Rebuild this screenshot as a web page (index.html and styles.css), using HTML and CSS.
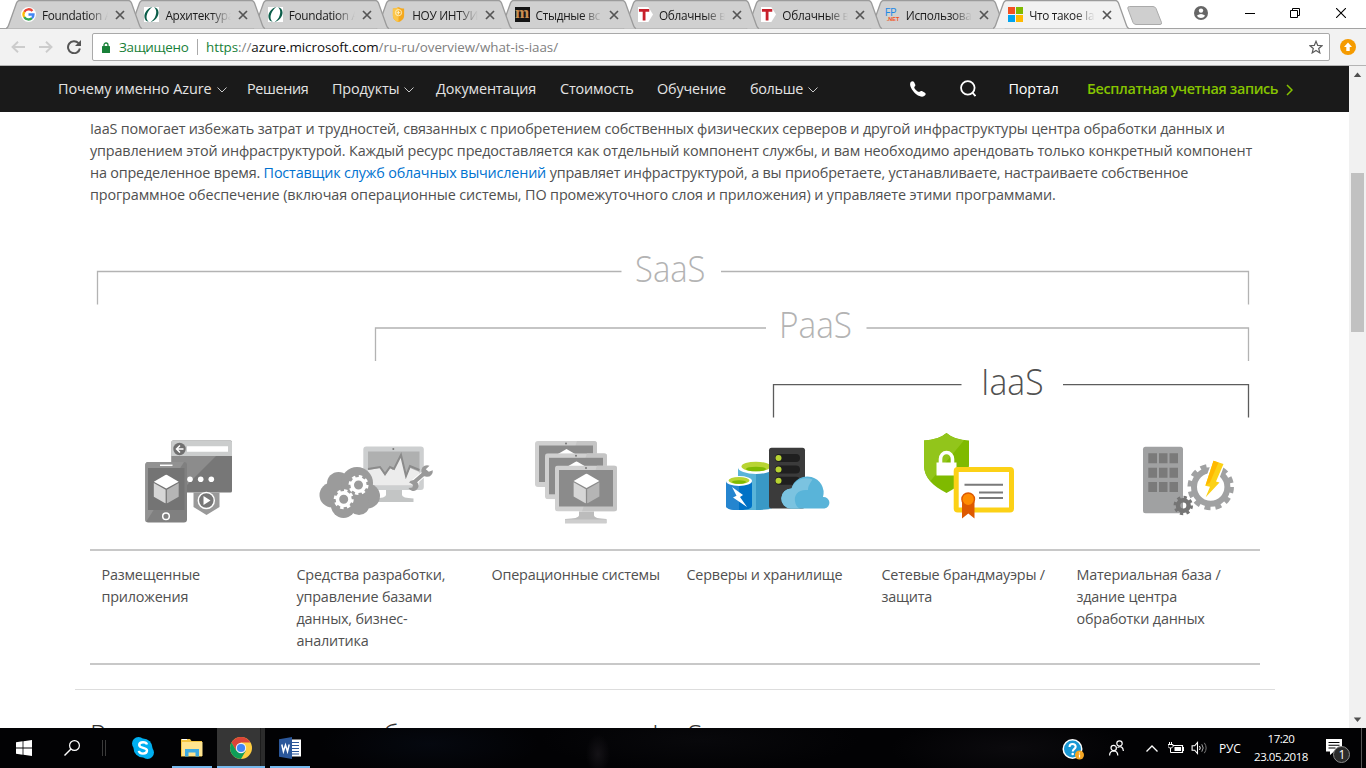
FILE: index.html
```html
<!DOCTYPE html>
<html lang="ru">
<head>
<meta charset="utf-8">
<title>Что такое IaaS?</title>
<link rel="stylesheet" href="styles.css">
</head>
<body>
<svg class="defs" width="0" height="0">
  <defs>
    <symbol id="tabshape" viewBox="0 0 137 29" preserveAspectRatio="none"><path d="M0 28.5 C1.500 28 2 27 2.500 25.500 L10.500 3 Q11.500 .5 13.500 .5 H122.500 Q124.500 .5 125.500 3 L133.500 25.500 C134 27 134.500 28 136 28.500" stroke="#9b9b9b" stroke-width="1.300"/></symbol>
    <symbol id="x" viewBox="0 0 10 10"><path d="M1 1 9 9M9 1 1 9" stroke="#555" stroke-width="1.700" fill="none"/></symbol>
    <symbol id="leaf" viewBox="0 0 16 16"><path fill="#fff" d="M0 0h16v16H0z"/><path fill="#0b5d49" fill-rule="evenodd" d="M9 0C4 1 0 6 .5 11c.3 3 2 4.500 4.500 4.800C2.500 14 2 10.500 3.500 7 4.500 4.500 6.500 1.500 9 0ZM10.500 .2c3 2 3 6 1.800 9C11.300 12 9.500 14.300 7 15.800 11.500 15 15.800 10 15.500 5.500 15.300 2.500 13.500.5 10.500 .2Z"/></symbol>
    <symbol id="tred" viewBox="0 0 16 16"><path fill="#fff" d="M0 0h11l5 8-5 8H0z"/><path fill="#c8202b" d="M1 2h11v3H8v9.500H5V5H1z"/></symbol>
    <symbol id="cube" viewBox="0 0 24 28"><path fill="#fff" d="M12 0 24 7 12 13.500 0 7z"/><path fill="#d6d6d6" d="M0 8.200 11.400 14.700V28L0 21.500z"/><path fill="#b5b5b5" d="M24 8.200 12.600 14.700V28L24 21.500z"/></symbol>
    <symbol id="monitor" viewBox="0 0 62 46"><rect width="62" height="46" rx="3" fill="#d0d0d0"/><path d="M42 0h17q3 0 3 3v40q0 3-3 3H27z" fill="#c5c5c5"/><rect x="4" y="4.500" width="54" height="36.500" fill="#8b8b8b"/><circle cx="31" cy="2.500" r="1" fill="#777"/><use href="#cube" x="18" y="8" width="27" height="30"/></symbol>
    <symbol id="chev" viewBox="0 0 10 6"><path d="M.5.5 5 5 9.500.5" fill="none" stroke="#c8c8c8" stroke-width="1"/></symbol>
  </defs>
</svg>

<div class="screen">
  <header class="tabstrip">
    <div class="tab t1"><svg class="shape"><use href="#tabshape"/></svg>
      <svg class="fav" viewBox="0 0 16 16"><circle cx="8" cy="8" r="8" fill="#fff"/><g fill="none" stroke-width="2.500"><path d="M12.200 4.300A5.300 5.300 0 0 0 3.500 5.200" stroke="#ea4335"/><path d="M3.500 5.200a5.300 5.300 0 0 0 0 5.600" stroke="#fbbc05"/><path d="M3.500 10.800a5.300 5.300 0 0 0 8.200 1" stroke="#34a853"/><path d="M11.700 11.800A5 5 0 0 0 13.300 8H8" stroke="#4285f4"/></g></svg>
      <span class="ttl">Foundation A</span><svg class="close"><use href="#x"/></svg></div>
    <div class="tab t2"><svg class="shape"><use href="#tabshape"/></svg><svg class="fav"><use href="#leaf"/></svg><span class="ttl">Архитектура</span><svg class="close"><use href="#x"/></svg></div>
    <div class="tab t3"><svg class="shape"><use href="#tabshape"/></svg><svg class="fav"><use href="#leaf"/></svg><span class="ttl">Foundation A</span><svg class="close"><use href="#x"/></svg></div>
    <div class="tab t4"><svg class="shape"><use href="#tabshape"/></svg>
      <svg class="fav" viewBox="0 0 16 16"><path d="M2 1.500Q5 2 8 0q3 2 6 1.500V9c0 4-3 6-6 7-3-1-6-3-6-7z" fill="#f4a81d"/><path d="M2 1.500Q5 2 8 0v16c-3-1-6-3-6-7z" fill="#fbc64a"/><circle cx="8" cy="6" r="3.300" fill="none" stroke="#fff0c0"/><path d="M6 6h4M8 4v4" stroke="#fff0c0"/></svg>
      <span class="ttl">НОУ ИНТУИ</span><svg class="close"><use href="#x"/></svg></div>
    <div class="tab t5"><svg class="shape"><use href="#tabshape"/></svg><span class="fav mfav">m</span><span class="ttl">Стыдные вс</span><svg class="close"><use href="#x"/></svg></div>
    <div class="tab t6"><svg class="shape"><use href="#tabshape"/></svg><svg class="fav"><use href="#tred"/></svg><span class="ttl">Облачные в</span><svg class="close"><use href="#x"/></svg></div>
    <div class="tab t7"><svg class="shape"><use href="#tabshape"/></svg><svg class="fav"><use href="#tred"/></svg><span class="ttl">Облачные в</span><svg class="close"><use href="#x"/></svg></div>
    <div class="tab t8"><svg class="shape"><use href="#tabshape"/></svg><span class="fav fp"><span>FP</span><b>.NET</b></span><span class="ttl">Использова</span><svg class="close"><use href="#x"/></svg></div>
    <div class="tab active"><svg class="shape"><use href="#tabshape"/></svg>
      <svg class="fav" viewBox="0 0 16 16"><path fill="#f25022" d="M0 0h7.500v7.500H0z"/><path fill="#7fba00" d="M8.500 0H16v7.500H8.500z"/><path fill="#00a4ef" d="M0 8.500h7.500V16H0z"/><path fill="#ffb900" d="M8.500 8.500H16V16H8.500z"/></svg>
      <span class="ttl">Что такое Ia</span><svg class="close"><use href="#x"/></svg></div>
    <svg class="newtab" viewBox="0 0 36 19"><path d="M2.500.5H26q2 0 3 2l5.500 14q.5 2-1.500 2H9q-2 0-3-2L.8 2.500Q.5.5 2.500.5z" fill="#cfcfcf" stroke="#aaa"/></svg>
    <div class="winctl">
      <svg class="user" viewBox="0 0 14 14"><circle cx="7" cy="7" r="7" fill="#666"/><circle cx="7" cy="4.600" r="2.200" fill="#fff"/><path d="M2.800 9.700q4.200-3.200 8.400 0Q9.500 12 7 12t-4.200-2.300" fill="#fff"/></svg>
      <svg class="min" viewBox="0 0 10 10"><path d="M0 5.500h10" stroke="#000"/></svg>
      <svg class="max" viewBox="0 0 10 10"><path d="M.5 2.500h7v7h-7zM2.500 2.500v-2h7v7h-2" fill="none" stroke="#000"/></svg>
      <svg class="cls" viewBox="0 0 10 10"><path d="M0 0 10 10M10 0 0 10" stroke="#000" stroke-width="1.100"/></svg>
    </div>
  </header>

  <div class="toolbar">
    <svg class="arrow" viewBox="0 0 14 12"><path d="M14 6H1.500M7 .7 1.500 6 7 11.300" fill="none" stroke="#ccc" stroke-width="1.900"/></svg>
    <svg class="arrow fwd" viewBox="0 0 14 12"><path d="M0 6h12.500M7 .7 12.500 6 7 11.300" fill="none" stroke="#ccc" stroke-width="1.900"/></svg>
    <svg class="reload" viewBox="0 0 14 14"><path d="M11.500 3.200A6 6 0 1 0 12.900 8.500" fill="none" stroke="#555" stroke-width="2"/><path d="M14 0v6H8z" fill="#555"/></svg>
    <div class="omnibox">
      <svg class="lock" viewBox="0 0 8 11"><path d="M2 5V3a2 2 0 0 1 4 0v2" fill="none" stroke="#188038" stroke-width="1.300"/><rect y="4" width="8" height="7" rx=".6" fill="#188038"/></svg>
      <span class="secure">Защищено</span><i class="bar"></i>
      <span class="url"><em>https</em>://<b>azure.microsoft.com</b>/ru-ru/overview/what-is-iaas/</span>
      <svg class="star" viewBox="0 0 14 14"><path d="M7 1.300 8.700 5.400 13 5.700 9.700 8.500 10.800 12.900 7 10.500 3.200 12.900 4.300 8.500 1 5.700 5.300 5.400z" fill="none" stroke="#5a5a5a" stroke-width="1.200"/></svg>
    </div>
    <svg class="update" viewBox="0 0 16 16"><circle cx="8" cy="8" r="8" fill="#f59b00"/><path d="M8 3.500 12 8H9.700v4H6.300V8H4z" fill="#fff"/></svg>
  </div>

  <div class="viewport">
    <div class="page">
      <nav class="nav">
        <a class="n1">Почему именно Azure<svg><use href="#chev"/></svg></a><a class="n2">Решения</a><a class="n3">Продукты<svg><use href="#chev"/></svg></a><a class="n4">Документация</a><a class="n5">Стоимость</a><a class="n6">Обучение</a><a class="n7">больше<svg><use href="#chev"/></svg></a>
        <svg class="phone" viewBox="0 0 16 16"><path d="M1 .8C2 0 3.300 0 4 1l1.300 2.800c.2.700 0 1.200-.8 1.900-.7.700.2 2.200 1.700 3.600s2.900 2 3.700 1.300c.7-.6 1.300-.8 2-.5l3 1.700c.9.500 1 1.500.2 2.500-1.200 1.500-3.200 1.800-5.600.8C5.500 13.500 2 9.500.5 5.500-.2 3.500 0 1.800 1 .8z" fill="#fff"/></svg>
        <svg class="search" viewBox="0 0 17 18"><circle cx="8.300" cy="8.300" r="7.200" fill="none" stroke="#fff" stroke-width="1.900"/><path d="m13 13 3.500 4" stroke="#fff" stroke-width="2"/></svg>
        <a class="portal">Портал</a>
        <a class="free">Бесплатная учетная запись</a>
        <svg class="go" viewBox="0 0 7 12"><path d="M1 1l5 5-5 5" fill="none" stroke="#86c400" stroke-width="1.500"/></svg>
      </nav>

      <main class="content">
        <p class="intro"><span class="l1">IaaS помогает избежать затрат и трудностей, связанных с приобретением собственных физических серверов и другой инфраструктуры центра обработки данных и</span><br><span class="l2">управлением этой инфраструктурой. Каждый ресурс предоставляется как отдельный компонент службы, и вам необходимо арендовать только конкретный компонент</span><br><span class="l3">на определенное время. <a>Поставщик служб облачных вычислений</a> управляет инфраструктурой, а вы приобретаете, устанавливаете, настраиваете собственное</span><br><span class="l4">программное обеспечение (включая операционные системы, ПО промежуточного слоя и приложения) и управляете этими программами.</span></p>

        <svg class="diagram" viewBox="90 240 1170 300">
          <g fill="none" stroke="#b3b3b3" stroke-width="1.300">
            <path d="M97.500 304.500V271.500H621.500M721 271.500H1248.500V304.500"/>
            <path d="M375.500 361V328H766M866.500 328H1248.500V361"/>
            <path d="M773.500 417.500V384.700H961.500M1063 384.700H1248.500V417.500" stroke="#5c5c5c"/>
          </g>
          <g class="lbl">
            <text x="635" y="282" textLength="70.500" lengthAdjust="spacingAndGlyphs">SaaS</text>
            <text x="779" y="338.300" textLength="73" lengthAdjust="spacingAndGlyphs">PaaS</text>
            <text x="981" y="395" textLength="62.500" lengthAdjust="spacingAndGlyphs" class="dark">IaaS</text>
          </g>

          <!-- hosted applications -->
          <rect x="171.500" y="440.500" width="60.500" height="52" rx="1.500" fill="#777"/>
          <path d="M171.500 456V442q0-1.500 1.500-1.500h57.500q1.500 0 1.500 1.500v14z" fill="#cbcdcd"/>
          <path d="M171.500 456H216l-36 36h-8.500z" fill="#8c8c8c"/>
          <circle cx="179.500" cy="449" r="6.200" fill="#707070"/>
          <path d="M183.500 449h-7M180 445.500l-3.500 3.500 3.500 3.500" fill="none" stroke="#fff" stroke-width="1.500"/>
          <path d="M187 446.200h41v5.600h-41z" fill="#fff"/>
          <g fill="#fff"><circle cx="190" cy="479.300" r="2.800"/><circle cx="200.700" cy="479.300" r="2.800"/><circle cx="211.300" cy="479.300" r="2.800"/></g>
          <path d="M193.500 492.500H219.500V507L206.500 515 193.500 507z" fill="#999"/>
          <circle cx="206.300" cy="500.500" r="8" fill="#777" stroke="#fff" stroke-width="1.500"/><path d="M203.500 496l7 4.500-7 4.500z" fill="#fff"/>
          <rect x="145.300" y="462" width="41.700" height="60.500" rx="3" fill="#808080"/>
          <path d="M148.500 462H184L146 522q-.7-.5-.7-3V465q0-3 3.200-3z" fill="#929292"/>
          <path d="M148 468h36.500v42H148z" fill="#747474"/><path d="M160 465.300h12.500" stroke="#fff" stroke-width="1.500"/>
          <circle cx="166" cy="516.300" r="3.300" fill="none" stroke="#fff" stroke-width="1.500"/>
          <use href="#cube" x="153" y="474.500" width="26.500" height="29"/>

          <!-- development tools -->
          <rect x="363.300" y="446.500" width="60.500" height="43.500" rx="3" fill="#cdcfd0"/>
          <path d="M368 451.500h51.500v34H368z" fill="#afb0b0"/>
          <path d="M368 470l12-2 5 8 5-8 3 2 8-15 5 22 4-9 9.500 4v13.500H368z" fill="#ececec"/>
          <path d="M368 469l12-2 5 7 5-7 4 2 7-14 5 21 4-10 9.500 4" fill="none" stroke="#8b8b8b" stroke-width="2"/>
          <circle cx="393.300" cy="449" r="1" fill="#777"/>
          <path d="M386 490h16v5q0 3 11.500 3.500v3.500H374v-3.500q12-.5 12-3.500z" fill="#c3c5c5"/>
          <path d="M412 484l15-13" stroke="#fff" stroke-width="6"/><path d="M412 484l15-13" stroke="#999" stroke-width="4"/>
          <path d="M429.500 465.800a5.800 5.800 0 1 0 3.300 4.500l-4 1.500-3-2.600zM409 482.500a5.300 5.300 0 1 1-.5 5.500l3.800-.5 1-3z" fill="#999"/>
          <g fill="#9b9b9b"><circle cx="332" cy="495" r="12.500"/><circle cx="338.500" cy="483.500" r="11.500"/><circle cx="357" cy="483" r="16"/><circle cx="367.500" cy="496" r="12.500"/><circle cx="343.500" cy="505.500" r="12.500"/><circle cx="359" cy="504.500" r="10.500"/></g>
          <g fill="none" stroke="#fff"><circle cx="358.500" cy="485" r="6.300" stroke-width="3.600"/><circle cx="358.500" cy="485" r="8.600" stroke-width="2.800" stroke-dasharray="3.380 3.380"/><circle cx="343.700" cy="499.200" r="6.300" stroke-width="3.600"/><circle cx="343.700" cy="499.200" r="8.600" stroke-width="2.800" stroke-dasharray="3.380 3.380"/></g>

          <!-- operating systems -->
          <use href="#monitor" x="535" y="441" width="62" height="46"/>
          <use href="#monitor" x="545" y="453.300" width="62" height="46"/>
          <use href="#monitor" x="555" y="465.500" width="62" height="46"/>
          <path d="M579 511.500h15v4q0 3 12.500 3.500v4.300H565V519q14-.5 14-3.500z" fill="#bcbcbc"/><path d="M565 519.500h41.500v3.800H565z" fill="#cecece"/>

          <!-- servers and storage -->
          <path d="M738 467v39q0 4 18 4t18-4v-39z" fill="#3999c6"/><path d="M738 467v39q0 4 18 4v-43z" fill="#59b4d9"/>
          <ellipse cx="756" cy="467.500" rx="18" ry="6.500" fill="#fff"/><ellipse cx="756" cy="466.500" rx="14.500" ry="4.800" fill="#b8d432"/><ellipse cx="756" cy="469" rx="10" ry="2.300" fill="#7fba00"/>
          <path d="M726 481v25q0 4 13 4t13-4v-25z" fill="#0072c6"/><path d="M726 481v25q0 4 13 4v-29z" fill="#2585cf"/>
          <ellipse cx="739" cy="481" rx="13" ry="5" fill="#fff"/><ellipse cx="739" cy="480.500" rx="10.500" ry="3.500" fill="#b8d432"/><ellipse cx="739" cy="482" rx="7" ry="1.800" fill="#7fba00"/>
          <path d="M732 487l11 8-3 2 7 10-14-9.500 3.500-1.800z" fill="#fff"/>
          <rect x="769" y="447.800" width="36" height="60.700" rx="2.500" fill="#3b3b3b"/>
          <g fill="#1f1f1f"><rect x="775" y="454" width="25" height="8" rx="4"/><rect x="775" y="465.400" width="25" height="8" rx="4"/><rect x="775" y="476.800" width="25" height="8" rx="4"/></g>
          <g fill="#b8d432"><circle cx="778.500" cy="458" r="3"/><circle cx="778.500" cy="469.400" r="3"/><circle cx="778.500" cy="480.800" r="3"/></g>
          <path d="M791 508.500a9.500 9.500 0 0 1 .5-20 15.500 15.500 0 0 1 31.500 8.500 5.800 5.800 0 0 1 1.500 11.500z" fill="#59b4d9"/>
          <path d="M791 508.500a9.500 9.500 0 0 1 .5-20 15.500 15.500 0 0 1 21-9q-5 7-4.500 10.500c-10-1-14 5-13 11 .4 3.500 2 6.500 5 7.500z" fill="#7bc3e0"/>

          <!-- firewall and security -->
          <path d="M946.500 433q8 7 22.500 7.500v24.500c0 13-9 21-22.500 28-13.500-7-22.500-15-22.500-28V440.500q14.500-.5 22.500-7.500z" fill="#7fba00"/>
          <path d="M946.500 433q7 6 17.500 7.200L930.500 481c-4-4.500-6.500-9.500-6.500-16V440.500q14.500-.5 22.500-7.500z" fill="#92c51b"/>
          <path d="M940.500 464v-5a6 6.500 0 0 1 12 0v5" fill="none" stroke="#fff" stroke-width="3.600"/><path d="M936.500 462.500h20V475.500h-20z" fill="#fff"/>
          <rect x="956.200" y="469.500" width="55.300" height="40.500" rx="1.500" fill="#fff" stroke="#fcd116" stroke-width="5"/>
          <path d="M964.500 484.800h38.500M979 492.400h24M979 498h24" stroke="#7a7a7a" stroke-width="2"/>
          <path d="M962 502h12.500v16.500l-6.200-5-6.300 5z" fill="#dd5900"/><circle cx="968.200" cy="499.300" r="6.300" fill="#ff8c00" stroke="#dd5900" stroke-width="1.400"/>

          <!-- data center building -->
          <rect x="1143" y="446.700" width="40" height="66.500" rx="2.500" fill="#a0a1a2"/>
          <g fill="#7a7a7a"><path d="M1148.300 453.300h8.700v10h-8.700zM1159 453.300h8.500v10h-8.500zM1169.500 453.300h8.500v10h-8.500zM1148.300 467.700h8.700v10h-8.700zM1159 467.700h8.500v10h-8.500zM1169.500 467.700h8.500v10h-8.500zM1148.300 482h8.700v10h-8.700zM1159 482h8.500v10h-8.500zM1169.500 482h8.500v10h-8.500z"/></g>
          <g fill="none" stroke="#a0a1a2"><circle cx="1210.700" cy="487" r="16.700" stroke-width="6"/><circle cx="1210.700" cy="487" r="21" stroke-width="4.500" stroke-dasharray="6 5"/></g>
          <g fill="none" stroke="#757575"><circle cx="1183.300" cy="505.500" r="5.300" stroke-width="4.500"/><circle cx="1183.300" cy="505.500" r="8.200" stroke-width="3" stroke-dasharray="3.220 3.220"/></g>
          <path d="M1212.500 459.500l12.500 4-6.500 17 3.500 1.500-17.500 18 3.500-12.500-5-1.500z" fill="#fff"/>
          <path d="M1213.500 460.700l10 3.300-7.500 17.600 3.500.9-13.800 14.800 4.300-10.600-4.700-.9z" fill="#fcd116"/><path d="M1213.500 460.700l5 1.700-8.500 20-4.500 3z" fill="#ffb900"/>
        </svg>

        <div class="table">
          <div>Размещенные приложения</div><div>Средства разработки,<br>управление базами<br>данных, бизнес-<br>аналитика</div><div>Операционные системы</div><div>Серверы и хранилище</div><div>Сетевые брандмауэры /<br>защита</div><div>Материальная база /<br>здание центра<br>обработки данных</div>
        </div>
      </main>
      <hr class="rule">
      <h2 class="next"><span class="w1">Распространенные</span><span class="w2">бизнес-сценарии</span><span>IaaS</span></h2>
    </div>
    <div class="scroll">
      <svg viewBox="0 0 17 17"><path d="M4.800 11 8.500 6.500 12.200 11z" fill="#505050"/></svg>
      <i class="thumb"></i>
      <svg class="down" viewBox="0 0 17 17"><path d="M4.800 6.500 8.500 11 12.200 6.500z" fill="#505050"/></svg>
    </div>
  </div>

  <footer class="taskbar">
    <svg class="win" viewBox="0 0 16 16"><path fill="#fff" d="M0 2.200 6.600 1.300V7.600H0zM7.400 1.200 16 0v7.600H7.400zM0 8.400h6.600v6.300L0 13.800zM7.400 8.400H16V16L7.400 14.800z"/></svg>
    <svg class="find" viewBox="0 0 16 16"><circle cx="10.500" cy="5.500" r="4.900" fill="none" stroke="#fff" stroke-width="1.200"/><path d="M7 9 .5 15.500" stroke="#fff" stroke-width="1.400"/></svg>
    <i class="sep"></i>
    <span class="app skype"><svg viewBox="0 0 22 22"><circle cx="6.500" cy="6.500" r="6.500" fill="#00aff0"/><circle cx="15.500" cy="15.500" r="6.500" fill="#00aff0"/><circle cx="11" cy="11" r="9.500" fill="#00aff0"/><path d="M15 7.500Q14.300 5.300 11 5.300q-3.800 0-3.800 2.700c0 3.800 7.800 2 7.800 5.600q0 3-4 3-3.700 0-4.200-2.700" fill="none" stroke="#fff" stroke-width="2.400"/></svg></span>
    <span class="app open"><svg viewBox="0 0 22 22"><path d="M0 2h9l1.500 2H21v15.500H0z" fill="#f4c542"/><path d="M1 5h20.500v14H1z" fill="#ffe48f"/><path d="M4 19.500v-7.500h14v7.500h-3.500v-4h-7v4z" fill="#3dabe2"/><path d="M1 2.500h5" stroke="#fff"/></svg></span>
    <span class="app open current"><svg viewBox="0 0 22 22"><circle cx="11" cy="11" r="11" fill="#ffcd40"/><path d="M1.500 5.500A11 11 0 0 1 20.500 5.500H11L6.200 13.700z" fill="#db4437"/><path d="M1.500 5.500A11 11 0 0 0 11 22l4.800-8.300H6.300z" fill="#0f9d58"/><circle cx="11" cy="11" r="5.200" fill="#f1f1f1"/><circle cx="11" cy="11" r="4.100" fill="#4285f4"/></svg></span>
    <span class="app open word"><svg viewBox="0 0 22 22"><path d="M11 2.500h11v17H11z" fill="#fff"/><path d="M13 5.500h7M13 8.500h7M13 11.500h7M13 14.500h7M13 17h7" stroke="#2b579a"/><path d="M0 2.300 13 0v22L0 19.700z" fill="#2b579a"/><path d="M2.800 7.500 4.400 14.500 6.500 8l2 6.500 1.700-7" fill="none" stroke="#fff" stroke-width="1.500"/></svg></span>
    <span class="fill"></span>
    <svg class="help" viewBox="0 0 22 22"><circle cx="10.500" cy="10" r="10" fill="#fff"/><circle cx="10.500" cy="10" r="8.500" fill="#1897d4"/><path d="M7.500 8Q7.500 5 10.500 5t3.200 2.800c0 2-3 2.200-3 4.700" fill="none" stroke="#fff" stroke-width="2"/><circle cx="10.700" cy="15" r="1.300" fill="#fff"/><circle cx="17.500" cy="16" r="4.500" fill="#f5a623"/><path d="M17.500 13.500v1M17.500 15.500v3" stroke="#fff" stroke-width="1.200"/></svg>
    <svg class="people" viewBox="0 0 15 16"><g fill="none" stroke="#fff" stroke-width="1.200"><circle cx="4.700" cy="8" r="2.700"/><path d="M.6 15.500q0-4.500 4.100-4.700 4 .2 4.100 4.700"/><circle cx="10.500" cy="3.500" r="2.700"/><path d="M8.500 7.500q5.300-2.500 5.900 3.500"/></g></svg>
    <svg class="up" viewBox="0 0 12 7"><path d="M.5 6.500 6 1l5.500 5.500" fill="none" stroke="#fff" stroke-width="1.300"/></svg>
    <svg class="bat" viewBox="0 0 16 12"><path d="M5 3.500h9.500v7H4.500M14.500 5.500h1v3h-1" fill="none" stroke="#fff" stroke-width="1.200"/><path d="M6.500 5h6.500v4H6.500z" fill="#fff"/><path d="M1.500 0v3M3.500 0v3M0 2.500h5v2L3.500 6h-2L0 4.500zM2.500 6v4.500h3" stroke="#fff" fill="none"/></svg>
    <svg class="vol" viewBox="0 0 16 14"><path d="M.6 4.800h2.600L6 1.500v11L3.200 9.200H.6z" fill="none" stroke="#fff" stroke-width="1.100"/><path d="M8 5q1.500 2 0 4" stroke="#fff" fill="none"/><path d="M10.300 3.300q2.800 3.700 0 7.400" stroke="#aaa" fill="none"/><path d="M12.800 1.800q3.700 5.200 0 10.400" stroke="#777" fill="none"/></svg>
    <span class="lang">РУС</span>
    <span class="clock"><span>17:20</span><span>23.05.2018</span></span>
    <svg class="note" viewBox="0 0 25 26"><path d="M0 1h16v12.500H8L4 17v-3.500H0z" fill="#fff"/><path d="M2.500 4.500h11M2.500 7.200h11M2.500 10h7" stroke="#000" stroke-width="1.100"/><circle cx="15.500" cy="16.500" r="8" fill="#2b2b2b" stroke="#8b8b8b"/><text x="12.500" y="20.800" class="badge">1</text></svg>
    <i class="peek"></i>
  </footer>
</div>
</body>
</html>
```
FILE: styles.css
```css
* { box-sizing: border-box; }
body { margin: 0; font-family: "Open Sans", "Noto Sans", sans-serif; background: #fff; overflow: hidden; }
svg { display: block; flex: none; }
.defs { position: absolute; }
.screen { width: 1366px; height: 768px; display: flex; flex-direction: column; overflow: hidden; }

/* browser tabs */
.tabstrip { height: 29px; display: flex; padding-left: 6px; background: #fff; flex: none; position: relative; box-shadow: inset 0 -1px #a3a3a3; }
.tab { width: 123.4px; height: 29px; flex: none; position: relative; display: flex; align-items: center; padding-left: 15px; }
.tab .shape { position: absolute; left: 0; top: 0; width: 137px; height: 29px; fill: #d0d0d0; z-index: -1; }
.t1 { z-index: 8; } .t2 { z-index: 7; } .t3 { z-index: 6; } .t4 { z-index: 5; }
.t5 { z-index: 4; } .t6 { z-index: 3; } .t7 { z-index: 2; } .t8 { z-index: 1; }
.active { z-index: 9; }
.active .shape { fill: #f2f2f2; }
.fav { width: 15px; height: 15px; flex: none; }
.mfav { background: #151515; color: #c98f52; font: bold 17px/11px "Liberation Serif", serif; text-align: center; }
.fp { display: flex; flex-direction: column; color: #1e88e5; font: 11px/10px "Open Sans", sans-serif; letter-spacing: -.3px; }
.fp b { color: #f4511e; font: bold 5.5px/5px "Liberation Sans", sans-serif; padding-left: 2px; letter-spacing: 0; }
.ttl { width: 70px; margin-left: 6px; font-size: 11.8px; letter-spacing: -.3px; line-height: 18px; white-space: nowrap; color: #1a1a1a; -webkit-mask-image: linear-gradient(90deg, #000 46px, transparent 66px); mask-image: linear-gradient(90deg, #000 46px, transparent 66px); }
.close { width: 10px; height: 10px; margin-left: 3px; margin-top: 1px; }
.newtab { width: 36px; height: 19px; margin: 6px 0 0 10px; }
.winctl { margin-left: auto; display: flex; align-items: flex-start; }
.user { width: 14px; height: 14px; margin: 6px 37px 0 0; }
.min { width: 10px; height: 10px; margin: 8px 35px 0 0; }
.max { width: 10px; height: 10px; margin: 8px 36px 0 0; }
.cls { width: 10px; height: 10px; margin: 8px 20px 0 0; }

/* address bar */
.toolbar { height: 37px; flex: none; background: #f2f2f2; border-bottom: 1px solid #b4b4b4; display: flex; align-items: center; padding-left: 11px; }
.arrow { width: 14px; height: 12px; }
.fwd { margin-left: 14px; }
.reload { width: 14px; height: 14px; margin-left: 14px; }
.omnibox { width: 1238px; height: 28px; margin-left: 11px; background: #fff; border: 1px solid #a9a9a9; border-radius: 2px; display: flex; align-items: center; padding-left: 9px; font-size: 13.4px; line-height: 20px; }
.lock { width: 8px; height: 11px; }
.secure { color: #188038; width: 79px; padding-left: 9px; margin-right: 8px; letter-spacing: -.3px; }
.bar { width: 1px; height: 16px; background: #aaa; margin-right: 8px; }
.url { color: #808080; letter-spacing: -.05px; white-space: nowrap; }
.url em { font-style: normal; color: #188038; }
.url b { font-weight: 400; color: #111; }
.star { width: 14px; height: 14px; margin-left: auto; margin-right: 6px; }
.update { width: 16px; height: 16px; margin-left: 10px; }

/* page */
.viewport { height: 662px; flex: none; display: flex; }
.page { width: 1349px; height: 662px; overflow: hidden; }
.nav { height: 46px; background: #1a1a1a; display: flex; align-items: center; padding-left: 58px; color: #e4e4e4; font-size: 14.4px; letter-spacing: -.15px; white-space: nowrap; }
.nav a { display: flex; align-items: center; line-height: 22px; flex: none; }
.nav a svg { width: 10px; height: 6px; margin: 2px 0 0 5px; }
.nav .n1 { width: 189px; letter-spacing: -.05px; } .nav .n2 { width: 85px; letter-spacing: -.35px; } .n3 { width: 104px; } .n4 { width: 124px; } .n5 { width: 97px; }
.n6 { width: 93px; } .nav .n7 { width: 160px; letter-spacing: -.3px; }
.phone { width: 16px; height: 16px; margin-right: 34px; }
.search { width: 16px; height: 17px; margin: 0 32px 2px 0; }
.nav .portal { width: 79px; padding-left: .5px; color: #fff; }
.nav .free { width: 199px; color: #86c400; font-weight: 600; letter-spacing: -.37px; }
.go { width: 7px; height: 12px; margin-top: 2px; }

.content { margin: 6px 89px 0 90px; width: 1170px; color: #505050; font-size: 14.4px; line-height: 22px; }
.intro { margin: 0; height: 122px; white-space: nowrap; }
.l1 { letter-spacing: -.17px; } .l2 { letter-spacing: -.151px; } .l3 { letter-spacing: -.185px; } .l4 { letter-spacing: -.125px; }
.intro a { color: #0072d0; }
.diagram { width: 1170px; height: 300px; }
.lbl { font-family: "Open Sans", sans-serif; font-weight: 300; font-size: 36px; fill: #b3b3b3; }
.lbl .dark { fill: #505050; }
.table { margin-top: 9px; height: 116px; border-top: 2px solid #c8c8c8; border-bottom: 2px solid #c8c8c8; display: grid; grid-template-columns: repeat(6, 195px); padding-top: 13px; letter-spacing: -.2px; }
.table div { padding: 0 60px 0 11.5px; white-space: nowrap; }
.table div:first-child { white-space: normal; }
.rule { width: 1200px; height: 1px; border: 0; margin: 24px 0 0 75px; background: #ddd; }
.next { margin: 27px 0 0 90px; display: flex; font-size: 27px; line-height: 36px; font-weight: 300; color: #333; white-space: nowrap; }
.w1 { width: 293px; } .w2 { width: 269px; }

.scroll { width: 17px; height: 662px; background: #f1f1f1; display: flex; flex-direction: column; }
.scroll svg { width: 17px; height: 17px; }
.thumb { width: 13px; height: 159px; margin: 90px 0 0 2px; background: #c1c1c1; }
.scroll .down { margin-top: auto; }

/* taskbar */
.taskbar { height: 40px; flex: none; display: flex; align-items: center; color: #fff; padding-left: 16px; background: radial-gradient(ellipse 12px 20px at 598px 26px, #141216, transparent), radial-gradient(ellipse 110px 30px at 430px 16px, #05080f, transparent), radial-gradient(ellipse 160px 30px at 700px 12px, #08080b, transparent), radial-gradient(ellipse 120px 30px at 1010px 20px, #0b0a0d, transparent), #020204; }
.win { width: 16px; height: 16px; }
.find { width: 16px; height: 16px; margin-left: 32px; }
.sep { width: 4px; height: 16px; margin-left: 22px; border-left: 1px solid #3a3a3a; border-right: 1px solid #3a3a3a; }
.app { width: 40px; height: 40px; display: flex; align-items: center; justify-content: center; flex: none; }
.app svg { width: 22px; height: 22px; }
.skype { margin-left: 17px; }
.open { border-bottom: 2px solid #76b9ed; padding-top: 2px; margin-left: 9px; }
.current { width: 48px; margin-left: 5px; background: linear-gradient(90deg, #363636 43px, #1c1c1c 43px, #1c1c1c 44px, #2c2c2c 44px); }
.word { margin-left: 5px; }
.fill { flex: 1; }
.help { width: 22px; height: 22px; margin: 3px 25px 0 0; }
.people { width: 15px; height: 16px; margin-right: 22px; }
.up { width: 12px; height: 7px; margin-right: 10px; }
.bat { width: 16px; height: 12px; margin-right: 7px; }
.vol { width: 17px; height: 14px; margin-right: 11px; }
.lang { width: 35px; font-size: 12px; letter-spacing: -.2px; }
.clock { width: 54px; display: flex; flex-direction: column; align-items: center; font-size: 11.5px; line-height: 18px; letter-spacing: -.48px; white-space: nowrap; margin-right: 18px; }
.note { width: 25px; height: 26px; margin: 6px 10px 0 0; }
.badge { font-size: 12px; fill: #fff; }
.peek { width: 1px; height: 40px; margin-right: 4px; background: #555; }
```
